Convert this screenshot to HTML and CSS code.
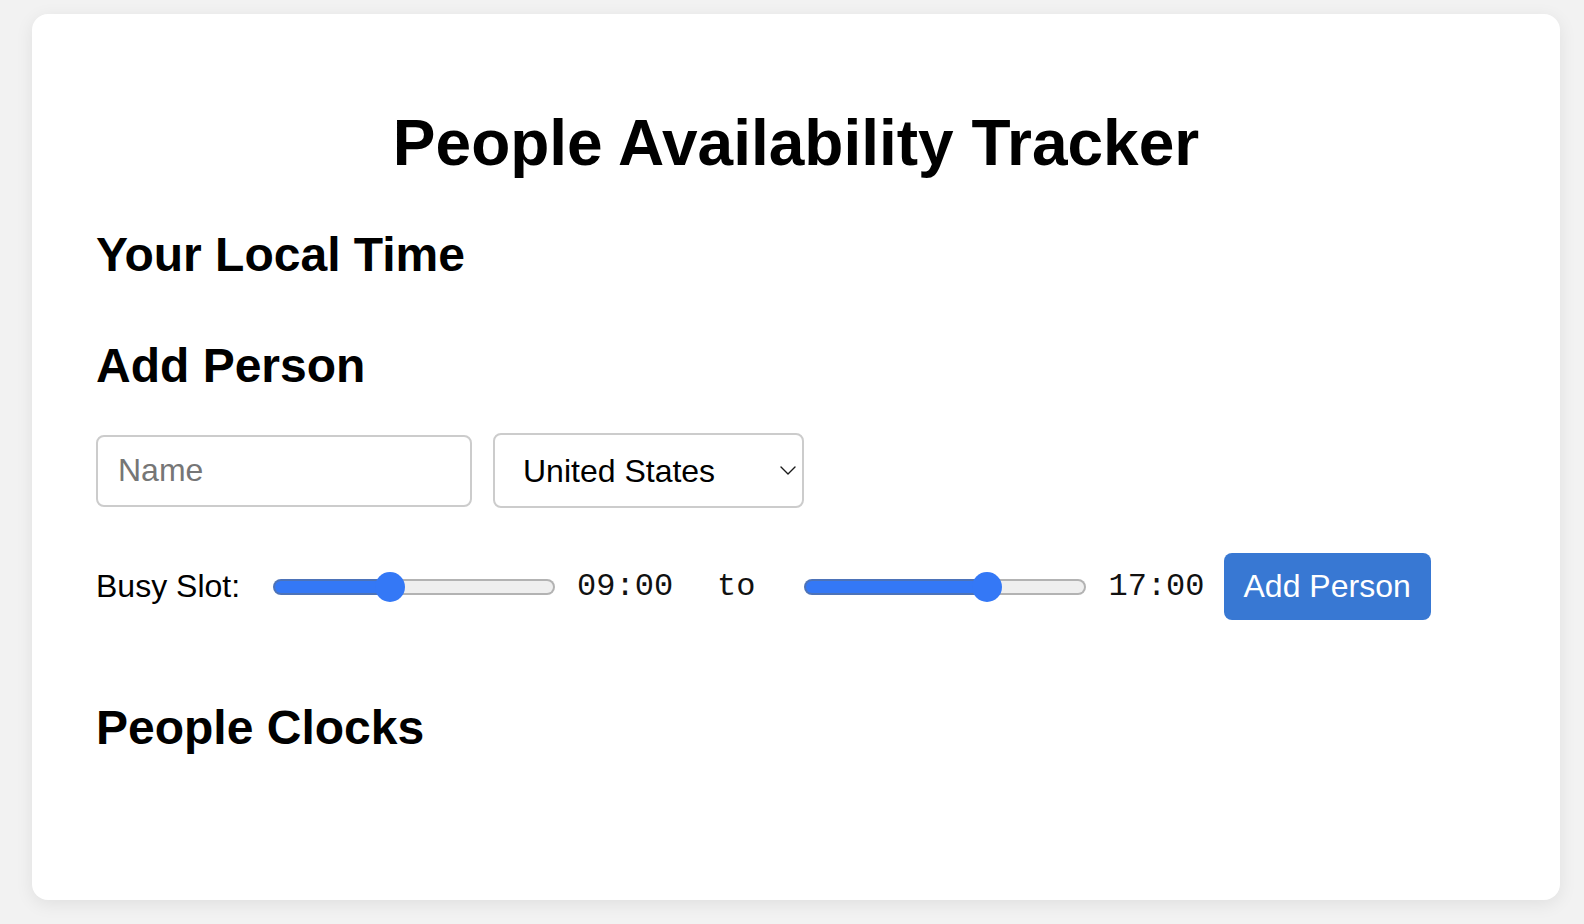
FILE: index.html
```html
<!DOCTYPE html>
<html lang="en">
<head>
<meta charset="utf-8">
<title>People Availability Tracker</title>
<link rel="stylesheet" href="styles.css">
</head>
<body>
<div class="card">
  <h1 class="title">People Availability Tracker</h1>

  <section class="section section-local">
    <h2 class="heading">Your Local Time</h2>
    <div class="local-time"></div>
  </section>

  <section class="section section-add">
    <h2 class="heading">Add Person</h2>
    <div class="fields">
      <input class="text-input" type="text" placeholder="Name">
      <div class="select-wrap">
        <select class="select">
          <option>United States</option>
          <option>United Kingdom</option>
          <option>Germany</option>
          <option>India</option>
          <option>Japan</option>
        </select>
        <svg class="chevron" width="16" height="9" viewBox="0 0 16 9" aria-hidden="true"><polyline points="1,1 8,8 15,1" fill="none" stroke="#1a1a1a" stroke-width="1.4" stroke-linecap="round" stroke-linejoin="round"/></svg>
      </div>
    </div>
    <div class="slot-row">
      <span class="slot-label">Busy Slot:</span>
      <input class="range range-start" type="range" min="0" max="100" step="0.1" value="40.3" style="--p:40.3%">
      <span class="time time-start">09:00</span>
      <span class="to">to</span>
      <input class="range range-end" type="range" min="0" max="100" step="0.1" value="66.7" style="--p:66.7%">
      <span class="time time-end">17:00</span>
      <button class="btn" type="button">Add Person</button>
    </div>
  </section>

  <section class="section section-clocks">
    <h2 class="heading">People Clocks</h2>
    <div class="clock-list"></div>
  </section>
</div>
</body>
</html>
```
FILE: styles.css
```css
* { box-sizing: border-box; }

html, body {
  margin: 0;
  background: #f2f2f2;
}

body {
  padding: 14px 24px 24px 32px;
  font-family: "Liberation Sans", Arial, Helvetica, sans-serif;
  color: #000;
}

.card {
  background: #fff;
  border-radius: 16px;
  padding: 48px 64px 48px 64px;
  box-shadow: 0 4px 18px rgba(0, 0, 0, 0.08);
}

.title {
  margin: 44px 0 0;
  font-size: 64px;
  line-height: 74px;
  font-weight: 700;
  text-align: center;
}

.heading {
  margin: 0;
  font-size: 48px;
  line-height: 56px;
  font-weight: 700;
}

.section-local { margin-top: 47px; }
.section-add { margin-top: 55px; }
.section-clocks { margin-top: 80px; }

.fields {
  margin-top: 39px;
  display: flex;
  align-items: center;
  gap: 21px;
}

.text-input {
  width: 376px;
  height: 72px;
  border: 2px solid #cccccc;
  border-radius: 8px;
  padding: 0 20px;
  font-family: "Liberation Sans", Arial, sans-serif;
  font-size: 32px;
  color: #000;
  outline: none;
}

.text-input::placeholder { color: #767676; }

.select-wrap {
  position: relative;
  width: 311px;
  height: 75px;
}

.select {
  -webkit-appearance: none;
  appearance: none;
  width: 100%;
  height: 100%;
  border: 2px solid #cccccc;
  border-radius: 8px;
  padding: 0 40px 0 28px;
  background: #fff;
  font-family: "Liberation Sans", Arial, sans-serif;
  font-size: 32px;
  color: #000;
  outline: none;
}

.chevron {
  position: absolute;
  right: 8px;
  top: 33px;
  pointer-events: none;
}

.slot-row {
  margin-top: 45px;
  display: flex;
  align-items: center;
  height: 67px;
}

.slot-label {
  font-size: 32px;
  line-height: 37px;
}

.range {
  -webkit-appearance: none;
  appearance: none;
  width: 282px;
  height: 32px;
  margin: 0;
  background: transparent;
  outline: none;
}

.range::-webkit-slider-runnable-track {
  box-sizing: border-box;
  height: 16px;
  border-radius: 8px;
  border: 2px solid transparent;
  background:
    linear-gradient(to right, #3478f6 0, #3478f6 var(--p), #efefef var(--p), #efefef 100%) padding-box,
    linear-gradient(to right, #4d73b8 0, #4d73b8 var(--p), #b3b3b3 var(--p), #b3b3b3 100%) border-box;
}

.range::-webkit-slider-thumb {
  -webkit-appearance: none;
  appearance: none;
  width: 30px;
  height: 30px;
  margin-top: -9px;
  border-radius: 50%;
  background: #3478f6;
  border: none;
}

.range-start { margin-left: 33px; }

.time {
  font-family: "Liberation Mono", "Courier New", monospace;
  font-size: 32px;
  line-height: 37px;
  color: #111;
}

.time-start { margin-left: 22px; }
.time-end { margin-left: 22px; }

.to {
  font-family: "Liberation Mono", "Courier New", monospace;
  font-size: 32px;
  line-height: 37px;
  color: #111;
  margin-left: 44px;
  margin-right: 49px;
}

.btn {
  margin-left: 19px;
  height: 67px;
  padding: 0 20px;
  border: none;
  border-radius: 8px;
  background: #3878d3;
  color: #fff;
  font-family: "Liberation Sans", Arial, sans-serif;
  font-size: 32px;
  cursor: pointer;
}

.clock-list {
  min-height: 96px;
}
```
